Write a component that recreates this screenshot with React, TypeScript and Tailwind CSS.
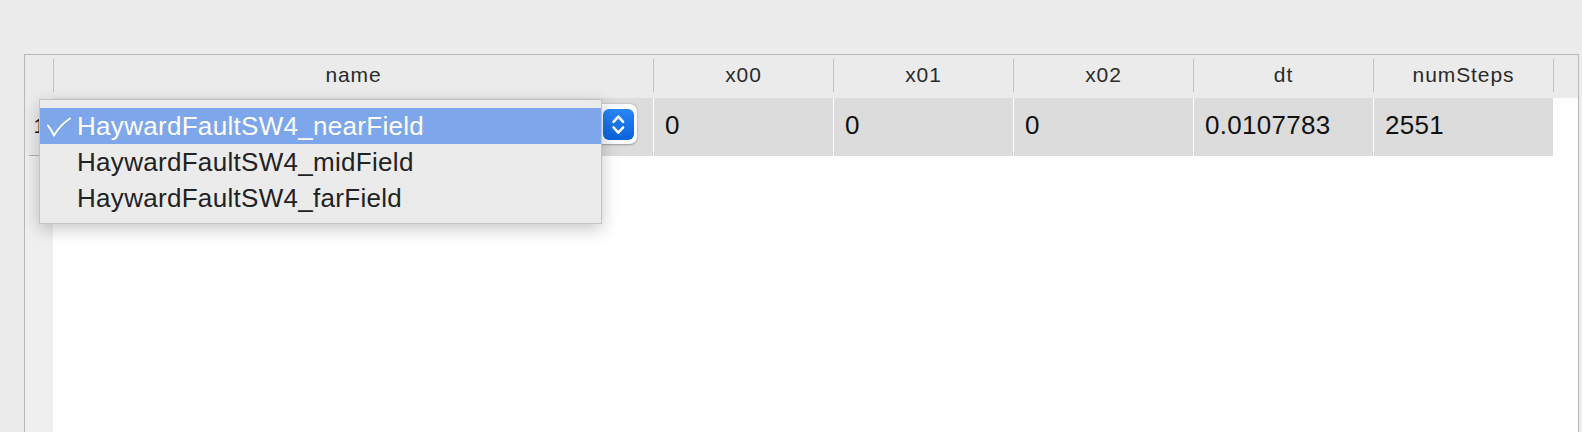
import React from "react";

const cols = ["x00", "x01", "x02", "dt", "numSteps"];
const vals = ["0", "0", "0", "0.0107783", "2551"];

function HeaderCell({ label, w }: { label: string; w: string }) {
  return (
    <div className={`flex h-full ${w}`}>
      <div className="mt-[4px] h-[33px] w-px bg-[#c3c3c3]" />
      <div className="flex flex-1 items-center justify-center pb-[4px] text-[21px] tracking-[0.9px] text-[#2a2a2a]">
        {label}
      </div>
    </div>
  );
}

export default function App() {
  return (
    <div className="relative h-[432px] w-[1582px] overflow-hidden bg-[#ececec] font-['Liberation_Sans',Arial,sans-serif]">
      <div className="pl-[24px] pr-[3px] pt-[54px]">
        <div className="flex h-[390px] flex-col border border-b-0 border-[#b8b8b8] bg-white">
          {/* header */}
          <div className="flex h-[43px] bg-[#ebebeb]">
            <div className="w-[28px]" />
            <HeaderCell label="name" w="w-[600px]" />
            {cols.map((c) => (
              <HeaderCell key={c} label={c} w="w-[180px]" />
            ))}
            <div className="flex flex-1">
              <div className="mt-[4px] h-[33px] w-px bg-[#c3c3c3]" />
            </div>
          </div>
          {/* data row */}
          <div className="flex h-[58px]">
            <div className="flex w-[28px] flex-col bg-[#ececec]">
              <div className="flex flex-1 items-center justify-center pb-[2px] text-[20px] text-[#111]">1</div>
              <div className="ml-[4px] h-px bg-[#b3b3b3]" />
            </div>
            <div className="flex w-[600px] items-start justify-end bg-[#dcdcdc] pr-[16px] pt-[6px]">
              <div className="flex h-[40px] w-[580px] items-center justify-end rounded-[7px] bg-[#fcfcfc] pr-[3px] shadow-[0_0.5px_2px_rgba(0,0,0,0.3)]">
                <div className="flex h-[31px] w-[31px] items-center justify-center rounded-[6px] bg-gradient-to-b from-[#2a86f7] to-[#0a62dc]">
                  <svg width="31" height="31" viewBox="0 0 31 31" fill="none">
                    <path d="M10.5 12.8 L15.3 7.6 L20.1 12.8" stroke="white" strokeWidth="2.5" strokeLinecap="round" strokeLinejoin="round" />
                    <path d="M10.5 18.4 L15.3 23.6 L20.1 18.4" stroke="white" strokeWidth="2.5" strokeLinecap="round" strokeLinejoin="round" />
                  </svg>
                </div>
              </div>
            </div>
            {vals.map((v, i) => (
              <div
                key={i}
                className="flex w-[180px] items-center border-l border-white bg-[#dcdcdc] pb-[3px] pl-[11px] text-[26px] tracking-[0.3px] text-[#111]"
              >
                {v}
              </div>
            ))}
            <div className="flex-1 bg-white" />
          </div>
          {/* rest */}
          <div className="flex flex-1">
            <div className="w-[28px] bg-[#efefef]" />
            <div className="flex-1 bg-white" />
          </div>
        </div>
      </div>

      {/* popup menu */}
      <div className="absolute left-[39px] top-[99px] w-[563px] border border-[#c4c4c4] bg-[#ebebeb] pb-[7px] pt-[8px] text-[26px] tracking-[0.3px] text-[#222] shadow-[0_5px_16px_rgba(0,0,0,0.22)]">
        <div className="flex h-[36px] items-center bg-[#7ea7eb] pt-[1px] text-white">
          <div className="flex w-[37px] pl-[7px]">
            <svg width="24" height="20" viewBox="0 0 24 20" fill="none">
              <path d="M1 8.5 Q4.5 13 7 18.5 Q13 8 23 1.5" stroke="white" strokeWidth="2" strokeLinecap="round" strokeLinejoin="round" />
            </svg>
          </div>
          <span>HaywardFaultSW4_nearField</span>
        </div>
        <div className="flex h-[36px] items-center pl-[37px] pt-[1px]">HaywardFaultSW4_midField</div>
        <div className="flex h-[36px] items-center pl-[37px] pt-[1px]">HaywardFaultSW4_farField</div>
      </div>
    </div>
  );
}
